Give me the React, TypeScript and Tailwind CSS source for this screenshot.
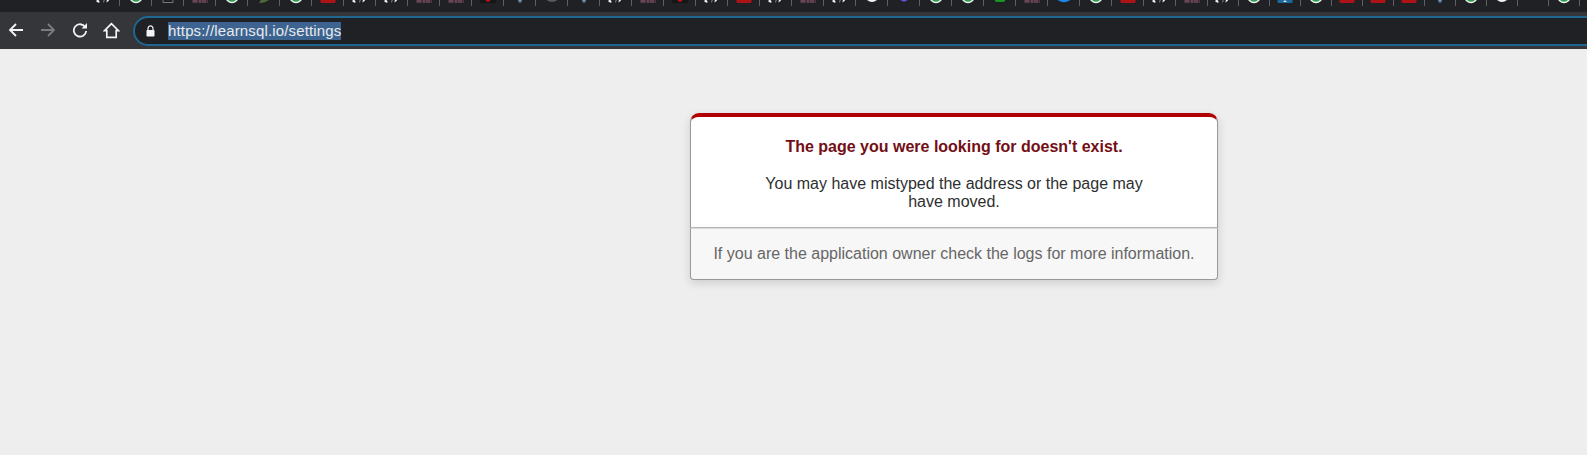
import React from 'react'

type Fav = 'code' | 'check' | 'box' | 'pic' | 'leaf' | 'red' | 'darkred' | 'drop' | 'grey' | 'white' | 'violet' | 'green' | 'blue' | 'tile' | 'none'

const favs: Fav[] = [
  'code', 'check', 'box', 'pic', 'check', 'leaf', 'check', 'red', 'code', 'code',
  'pic', 'pic', 'darkred', 'drop', 'grey', 'drop', 'code', 'pic', 'darkred', 'code',
  'red', 'code', 'pic', 'code', 'white', 'violet', 'check', 'check', 'green', 'pic',
  'blue', 'check', 'red', 'code', 'pic', 'code', 'check', 'tile', 'check', 'red',
  'red', 'red', 'drop', 'check', 'white', 'none', 'check',
]

const Favicon = ({ kind }: { kind: Fav }) => {
  return (
    <svg width="16" height="4" viewBox="0 0 16 4" className="block">
      {kind === 'code' && (
        <>
          <path d="M3.5 -1 L1.2 1 L3.4 2.4" stroke="#f1f1f1" strokeWidth="1.5" fill="none" />
          <path d="M7.5 2.4 L8.5 -1" stroke="#8f8f8f" strokeWidth="0.9" fill="none" />
          <path d="M10.5 2.4 L13.2 0.6 L11 -1 Z" fill="#f1f1f1" />
        </>
      )}
      {kind === 'check' && (
        <circle cx="8" cy="-3.5" r="6" fill="#2f9e4f" stroke="#f4f4f4" strokeWidth="1.4" />
      )}
      {kind === 'box' && <path d="M3 0 V2.5 H13 V0" stroke="#8a8a8a" strokeWidth="0.8" fill="none" />}
      {kind === 'pic' && (
        <>
          <rect x="0" y="0" width="16" height="3" fill="#3f3442" />
          <rect x="1" y="0" width="4" height="2.4" fill="#6e4450" />
          <rect x="7" y="0" width="2" height="2.8" fill="#564a66" />
          <rect x="10" y="0" width="4" height="2.6" fill="#6b3e49" />
        </>
      )}
      {kind === 'leaf' && <path d="M3 3 L8 2.6 L13 0 H5 Z" fill="#4d6b3f" />}
      {kind === 'red' && <path d="M0.5 0 H15.5 V2 Q15.5 3 14 3 H2 Q0.5 3 0.5 2 Z" fill="#ad1216" />}
      {kind === 'darkred' && (
        <>
          <rect x="0" y="0" width="16" height="3" fill="#161616" />
          <rect x="6" y="0" width="4" height="1.6" fill="#c01018" />
        </>
      )}
      {kind === 'drop' && <path d="M6 0 H10 L9 2.6 H7 Z" fill="#6f8fb0" />}
      {kind === 'grey' && <path d="M2.5 0 Q8 4 13.5 0 Z" fill="#5a5a5c" />}
      {kind === 'white' && <path d="M3 0 Q8 4 13 0 Z" fill="#f4f4f4" />}
      {kind === 'violet' && <path d="M4.5 0 Q8 3.6 11.5 0 Z" fill="#5b52d6" />}
      {kind === 'green' && <path d="M3 0 H13 V1.4 L8 2 L3 1.4 Z" fill="#169c21" />}
      {kind === 'blue' && <path d="M1.5 0 H14.5 L11.5 1.6 Q8 3 4.5 1.6 Z" fill="#1c86e8" />}
      {kind === 'tile' && (
        <>
          <path d="M0.5 0 H15.5 V2 Q15.5 3 14 3 H2 Q0.5 3 0.5 2 Z" fill="#1b6a9c" />
          <path d="M6 2 L8 0 L10 2 Z" fill="#cfe3f0" />
        </>
      )}
    </svg>
  )
}

const BookmarksBar = () => {
  return (
    <div className="flex h-3 bg-[#202124] pl-[88px] overflow-hidden">
      {favs.map((f, i) => (
        <div
          key={i}
          className={
            i < 35
              ? 'w-[32px] h-[6px] shrink-0 flex justify-center border-r border-[#5f6063]'
              : 'w-[31px] h-[6px] shrink-0 flex justify-center border-r border-[#5f6063]'
          }
        >
          <Favicon kind={f} />
        </div>
      ))}
    </div>
  )
}

const Toolbar = () => {
  return (
    <div className="flex items-center h-[37px] bg-[#35363a] overflow-hidden">
      <div className="flex items-center w-[133px] shrink-0 pl-[8px] pb-[1px]">
        <svg width="16" height="16" viewBox="0 0 16 16" fill="none" stroke="#f1f3f4" strokeWidth="1.8">
          <path d="M15 8 H2 M8 2 L2 8 L8 14" />
        </svg>
        <svg width="16" height="16" viewBox="0 0 16 16" fill="none" stroke="#7b7c7f" strokeWidth="1.8" className="ml-[16px]">
          <path d="M1 8 H14 M8 2 L14 8 L8 14" />
        </svg>
        <svg width="16" height="16" viewBox="0 0 16 16" fill="none" className="ml-[16px]">
          <path d="M13.2 5 A6.2 6.2 0 1 0 14.2 9" stroke="#f1f3f4" strokeWidth="1.8" />
          <path d="M15 1 V6.4 H9.6 Z" fill="#f1f3f4" />
        </svg>
        <svg width="17" height="17" viewBox="0 0 17 17" fill="none" stroke="#f4f5f5" strokeWidth="1.7" className="ml-[15px]">
          <path d="M8.5 1.6 L1.5 8.6 H3.8 V15.4 H13.2 V8.6 H15.5 Z" />
        </svg>
      </div>
      <div className="flex items-center h-[30px] flex-1 mr-[-24px] pl-[33px] bg-[#202124] border-2 border-[#1f6690] rounded-l-[15px] relative">
        <svg width="9" height="12" viewBox="0 0 9 12" className="absolute left-[11px] top-[7px]">
          <path d="M2 5 V3.4 A2.5 2.5 0 0 1 7 3.4 V5" stroke="#f1f3f4" strokeWidth="1.2" fill="none" />
          <rect x="0.5" y="5" width="8" height="6.5" rx="0.8" fill="#f1f3f4" />
        </svg>
        <span className="font-['Liberation_Sans',sans-serif] text-[15px] tracking-[0.15px] leading-[18px] text-[#e8eaed] bg-[#3d6490]">
          https://learnsql.io/settings
        </span>
      </div>
    </div>
  )
}

const ErrorDialog = () => {
  return (
    <div className="w-[528px] ml-[690px] pt-16 text-center text-[#2e2f30] font-['Liberation_Sans',Arial,sans-serif] text-base leading-[18px]">
      <div className="border border-[#cccccc] border-x-[#999999] border-b-[#bbbbbb] border-t-4 border-t-[#b00100] rounded-t-[9px] bg-white pt-[7px] px-[12%] shadow-[0_3px_8px_rgba(50,50,50,0.17)]">
        <h1 className="font-bold text-[#730e15] leading-6 my-[10.7px]">The page you were looking for doesn't exist.</h1>
        <p className="my-4">You may have mistyped the address or the page may have moved.</p>
      </div>
      <p className="p-4 bg-[#f7f7f7] border border-[#999999] border-t-[#dadada] rounded-b text-[#666666] shadow-[0_3px_8px_rgba(50,50,50,0.17)]">
        If you are the application owner check the logs for more information.
      </p>
    </div>
  )
}

const App = () => {
  return (
    <div className="h-[455px] bg-[#eeeeee] overflow-hidden">
      <BookmarksBar />
      <Toolbar />
      <ErrorDialog />
    </div>
  )
}

export default App
